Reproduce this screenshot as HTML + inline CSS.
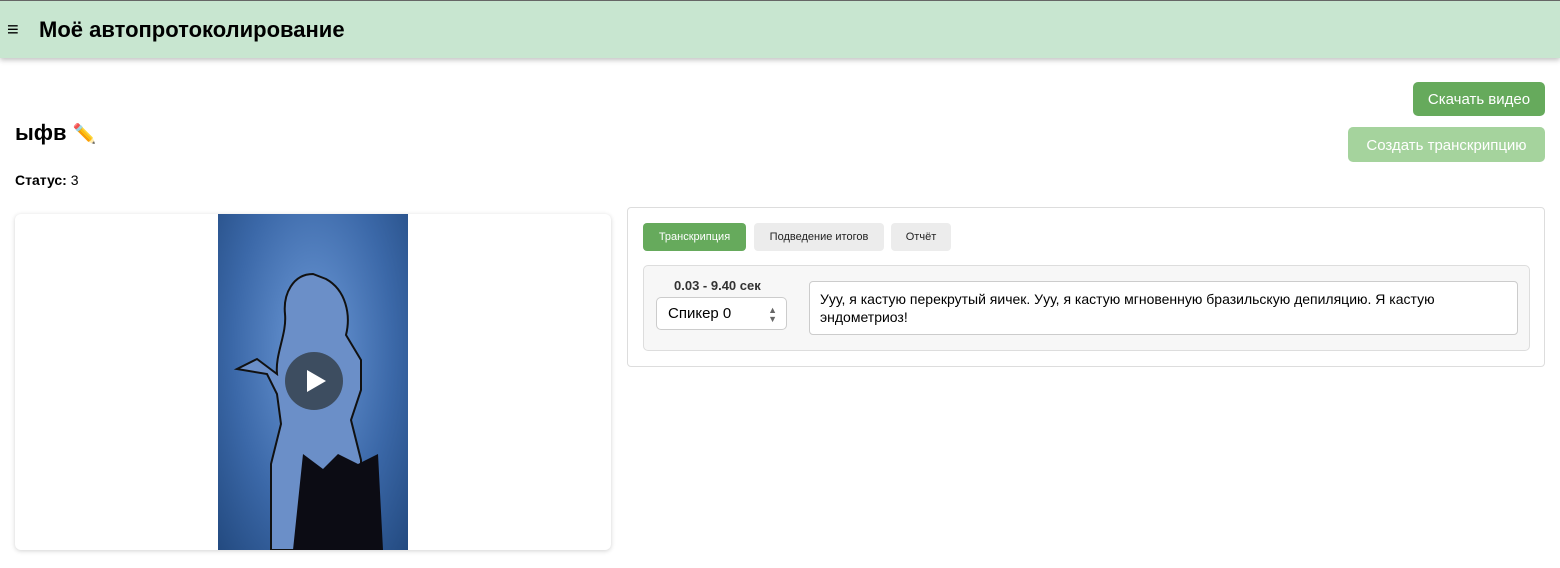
<!DOCTYPE html>
<html><head><meta charset="utf-8"><style>
*{box-sizing:border-box;margin:0;padding:0}
body{width:1560px;height:568px;background:#fff;font-family:"Liberation Sans",sans-serif;position:relative;overflow:hidden;color:#000}
.hdr{position:absolute;left:0;top:0;width:1560px;height:58px;background:#c8e6d0;border-top:1px solid #666;box-shadow:0 2px 5px rgba(0,0,0,.25)}
.hdr .m{position:absolute;left:7px;top:18px;font-size:20px}
.hdr h1{position:absolute;left:39px;top:16px;font-size:22px;font-weight:bold}
.btn{position:absolute;color:#fff;border-radius:5px;font-size:15px;text-align:center}
.card{position:absolute;left:15px;top:214px;width:596px;height:336px;border-radius:6px;box-shadow:0 1px 5px rgba(0,0,0,.18);overflow:hidden}
.panel{position:absolute;left:627px;top:207px;width:918px;height:160px;border:1px solid #ddd;border-radius:4px}
.tab{position:absolute;top:15px;height:28px;border-radius:4px;font-size:11px;line-height:28px;text-align:center;background:#ececec;color:#222}
.row{position:absolute;left:15px;top:57px;width:887px;height:86px;background:#f7f7f7;border:1px solid #ddd;border-radius:5px}
</style></head><body>
<div class="hdr"><span class="m">&#8801;</span><h1>Моё автопротоколирование</h1></div>
<div style="position:absolute;left:15px;top:120px;font-size:22px;font-weight:bold">ыфв <span style="font-weight:normal;font-size:19px">✏️</span></div>
<div style="position:absolute;left:15px;top:172px;font-size:14px"><b>Статус:</b> 3</div>
<div class="btn" style="left:1413px;top:82px;width:132px;height:34px;line-height:36px;background:#66aa5c">Скачать видео</div>
<div class="btn" style="left:1348px;top:127px;width:197px;height:35px;line-height:37px;background:#a5d39d">Создать транскрипцию</div>
<div class="card">
<div style="position:absolute;left:203px;top:0;width:190px;height:336px;background:radial-gradient(ellipse at 50% 40%,#6d9ad8,#3b68a8 60%,#234a80)"></div>
<svg style="position:absolute;left:203px;top:0" width="190" height="336">
<path d="M95 60c-20 0-30 20-28 40 2 20 -10 40-8 60l-20-15-20 10 30 5 10 20 4 30-10 40 0 86h90l0-90-10-40 10-30 0-30-15-25c5-20 0-45-20-56z" fill="#6b8fc8" stroke="#111" stroke-width="2"/>
<path d="M85 240l-10 96h90l-5-96-20 10-20-10-15 15z" fill="#0c0c14"/>
</svg>
<div style="position:absolute;left:270px;top:138px;width:58px;height:58px;border-radius:50%;background:rgba(50,60,70,.8)"></div>
<div style="position:absolute;left:292px;top:156px;width:0;height:0;border-left:19px solid #fff;border-top:11px solid transparent;border-bottom:11px solid transparent"></div>
</div>
<div class="panel">
<div class="tab" style="left:15px;width:103px;background:#66aa5c;color:#fff">Транскрипция</div>
<div class="tab" style="left:126px;width:130px">Подведение итогов</div>
<div class="tab" style="left:263px;width:60px">Отчёт</div>
<div class="row">
<div style="position:absolute;left:30px;top:12px;font-size:13px;font-weight:bold;color:#333">0.03 - 9.40 сек</div>
<div style="position:absolute;left:12px;top:31px;width:131px;height:33px;background:#fff;border:1px solid #ccc;border-radius:5px;font-size:15px;line-height:31px;padding-left:11px">Спикер 0<span style="position:absolute;right:9px;top:8px;font-size:9px;color:#666;line-height:9px">▲<br>▼</span></div>
<div style="position:absolute;left:165px;top:15px;width:709px;height:54px;background:#fff;border:1px solid #ccc;border-radius:4px;font-size:14px;line-height:18px;padding:8px 10px">Ууу, я кастую перекрутый яичек. Ууу, я кастую мгновенную бразильскую депиляцию. Я кастую эндометриоз!</div>
</div></div>
</body></html>
